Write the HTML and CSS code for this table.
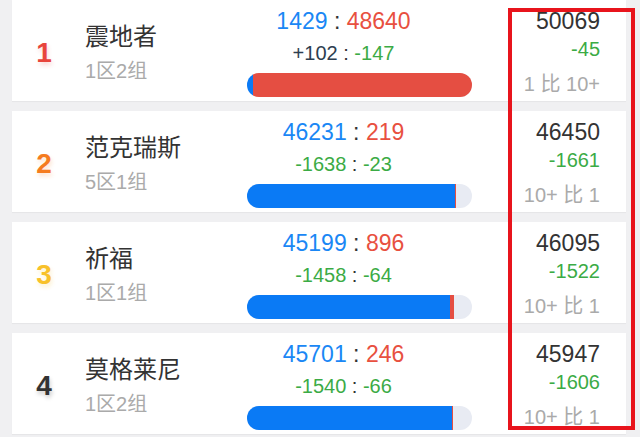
FILE: index.html
```html
<!DOCTYPE html>
<html lang="zh">
<head>
<meta charset="utf-8">
<link rel="stylesheet" href="styles.css">
</head>
<body>
<div class="list">
  <div class="card">
    <div class="rank rank-1">1</div>
    <div class="name-col">
      <div class="name">震地者</div>
      <div class="sub">1区2组</div>
    </div>
    <div class="mid-col">
      <div class="score"><span class="blue">1429</span> : <span class="red">48640</span></div>
      <div class="delta"><span class="navy">+102</span> : <span class="green">-147</span></div>
      <div class="bar"><div class="fill" style="width:100%"><span class="seg-blue" style="flex:1429"></span><span class="seg-red" style="flex:48640"></span></div></div>
    </div>
    <div class="right-col">
      <div class="total">50069</div>
      <div class="change">-45</div>
      <div class="ratio">1 比 10+</div>
    </div>
  </div>

  <div class="card">
    <div class="rank rank-2">2</div>
    <div class="name-col">
      <div class="name">范克瑞斯</div>
      <div class="sub">5区1组</div>
    </div>
    <div class="mid-col">
      <div class="score"><span class="blue">46231</span> : <span class="red">219</span></div>
      <div class="delta"><span class="green">-1638</span> : <span class="green">-23</span></div>
      <div class="bar"><div class="fill" style="width:92.77%"><span class="seg-blue" style="flex:46231"></span><span class="seg-red" style="flex:219"></span></div></div>
    </div>
    <div class="right-col">
      <div class="total">46450</div>
      <div class="change">-1661</div>
      <div class="ratio">10+ 比 1</div>
    </div>
  </div>

  <div class="card">
    <div class="rank rank-3">3</div>
    <div class="name-col">
      <div class="name">祈福</div>
      <div class="sub">1区1组</div>
    </div>
    <div class="mid-col">
      <div class="score"><span class="blue">45199</span> : <span class="red">896</span></div>
      <div class="delta"><span class="green">-1458</span> : <span class="green">-64</span></div>
      <div class="bar"><div class="fill" style="width:92.06%"><span class="seg-blue" style="flex:45199"></span><span class="seg-red" style="flex:896"></span></div></div>
    </div>
    <div class="right-col">
      <div class="total">46095</div>
      <div class="change">-1522</div>
      <div class="ratio">10+ 比 1</div>
    </div>
  </div>

  <div class="card">
    <div class="rank rank-4">4</div>
    <div class="name-col">
      <div class="name">莫格莱尼</div>
      <div class="sub">1区2组</div>
    </div>
    <div class="mid-col">
      <div class="score"><span class="blue">45701</span> : <span class="red">246</span></div>
      <div class="delta"><span class="green">-1540</span> : <span class="green">-66</span></div>
      <div class="bar"><div class="fill" style="width:91.77%"><span class="seg-blue" style="flex:45701"></span><span class="seg-red" style="flex:246"></span></div></div>
    </div>
    <div class="right-col">
      <div class="total">45947</div>
      <div class="change">-1606</div>
      <div class="ratio">10+ 比 1</div>
    </div>
  </div>

  <div class="highlight"></div>
</div>
</body>
</html>
```

FILE: styles.css
```css
html, body {
  margin: 0;
  padding: 0;
}
body {
  width: 640px;
  height: 437px;
  overflow: hidden;
  background: #f0f0f2;
  font-family: "Liberation Sans", "Noto Sans CJK SC", sans-serif;
  color: #333;
}
.list {
  position: relative;
  display: flex;
  flex-direction: column;
  gap: 10.2px;
  margin-top: -0.5px;
  padding: 0 14px 0 12px;
}
.card {
  display: flex;
  height: 101px;
  background: #fff;
  box-shadow: 0 1px 1px rgba(0,0,0,0.04);
}
.rank {
  width: 64px;
  text-align: center;
  font-size: 28px;
  font-weight: bold;
  line-height: 32px;
  padding-top: 37px;
  box-sizing: border-box;
}
.rank-1 { color: #e8453c; text-shadow: 1px 3px 4px rgba(232,69,60,0.22); }
.rank-2 { color: #f57c1f; text-shadow: 1px 3px 4px rgba(245,124,31,0.22); }
.rank-3 { color: #f8c12a; text-shadow: 1px 3px 4px rgba(248,193,42,0.22); }
.rank-4 { color: #333; text-shadow: 1px 3px 4px rgba(0,0,0,0.2); }

.name-col {
  width: 130px;
  margin-left: 9px;
  padding-top: 22px;
  box-sizing: border-box;
}
.name {
  font-size: 24px;
  line-height: 30px;
  color: #333;
}
.sub {
  font-size: 20px;
  line-height: 26px;
  margin-top: 6px;
  color: #aaa;
}
.mid-col {
  width: 257px;
  padding-top: 7px;
  box-sizing: border-box;
  text-align: center;
}
.score {
  font-size: 23px;
  line-height: 28px;
  color: #333;
}
.delta {
  font-size: 20px;
  line-height: 30px;
  margin-top: 3px;
  color: #333;
}
.blue { color: #1a87f5; }
.red { color: #e8503f; }
.green { color: #3bab45; }
.navy { color: #2d3e50; }

.bar {
  width: 225px;
  height: 24px;
  margin: 5px 0 0 32px;
  border-radius: 12px;
  background: #e8ebf3;
  overflow: hidden;
}
.fill {
  display: flex;
  height: 100%;
}
.seg-blue { background: #0a7af5; }
.seg-red { background: #e54e42; }

.right-col {
  flex: 1;
  padding: 7px 26px 0 0;
  text-align: right;
}
.total {
  font-size: 23px;
  line-height: 28px;
  color: #333;
}
.change {
  font-size: 20px;
  line-height: 28px;
  color: #3bab45;
}
.ratio {
  font-size: 20px;
  line-height: 28px;
  margin-top: 7px;
  color: #aaa;
}
.highlight {
  position: absolute;
  left: 508px;
  top: 8.5px;
  width: 127px;
  height: 422px;
  box-sizing: border-box;
  border: 4px solid #e8141c;
}
```
